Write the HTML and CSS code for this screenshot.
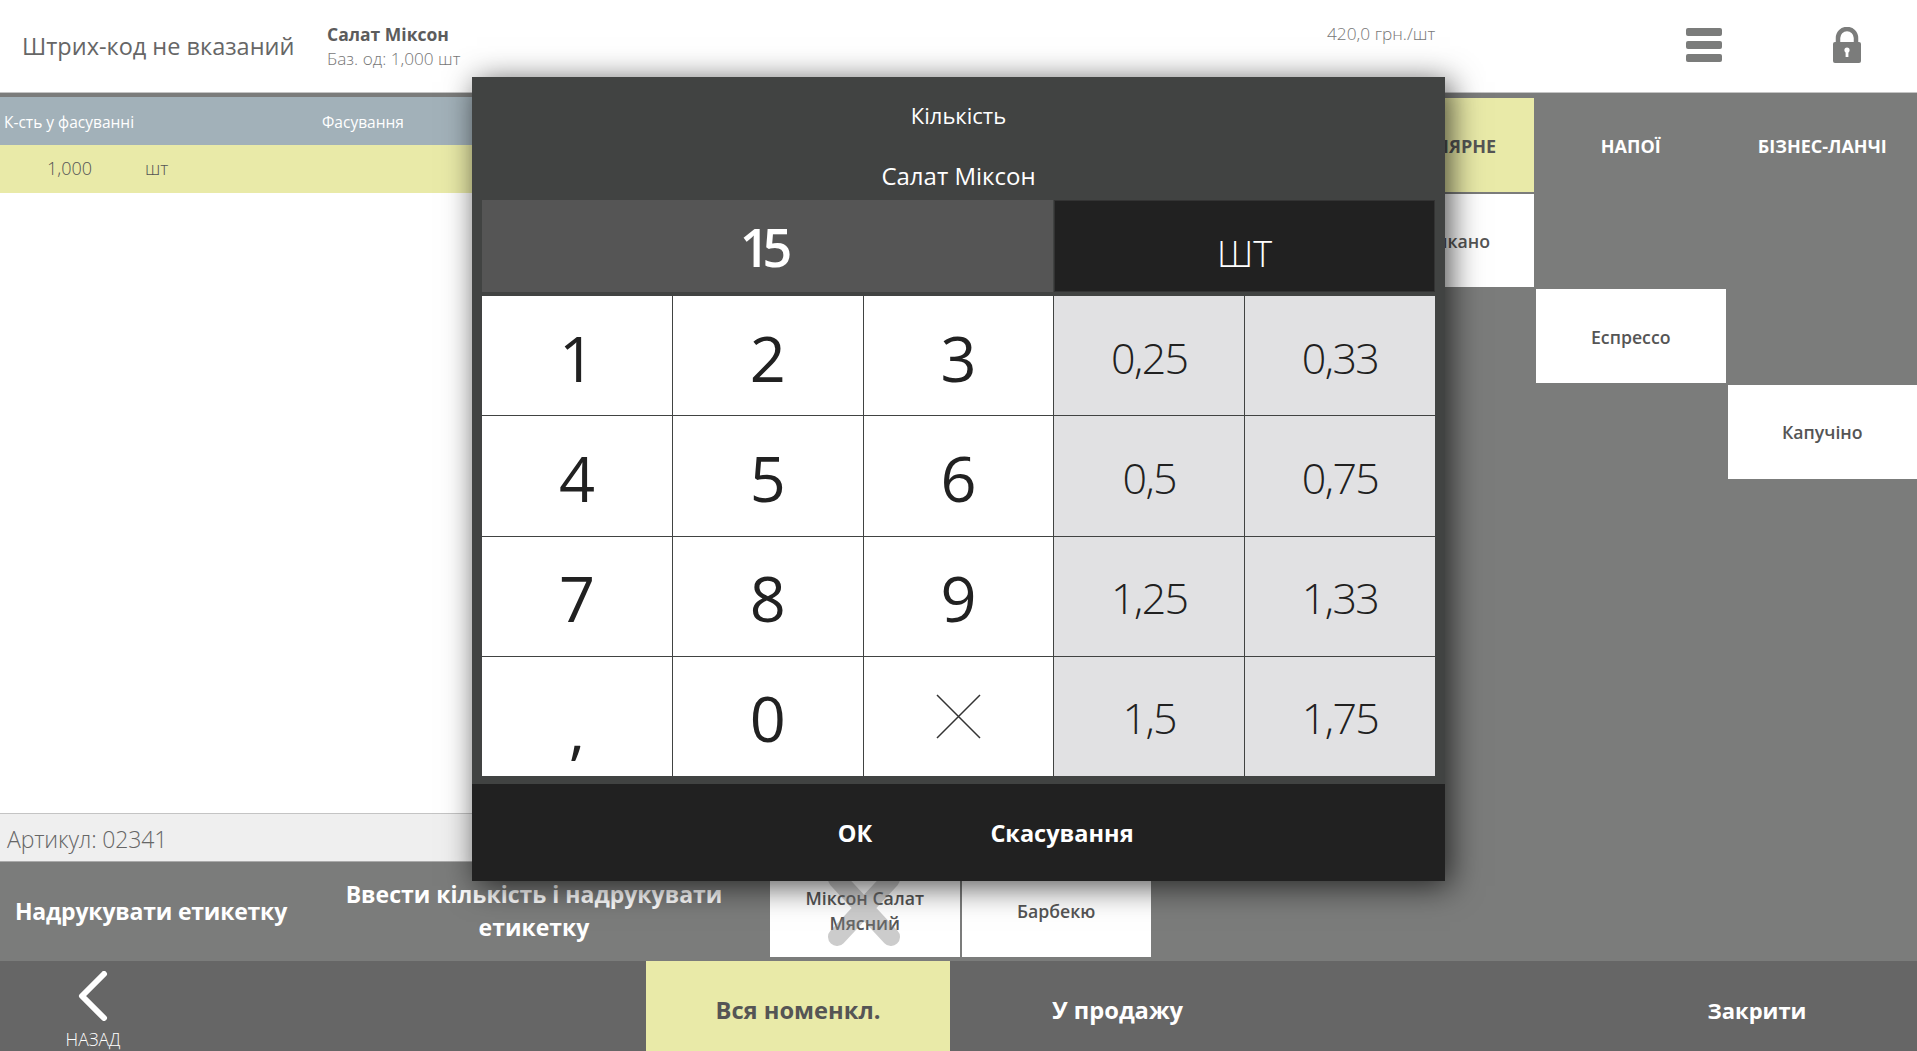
FILE: index.html
```html
<!DOCTYPE html>
<html lang="uk">
<head>
  <meta charset="UTF-8" />
  <meta name="viewport" content="width=device-width, initial-scale=1.0"/>
  <title>Кількість</title>
  <link rel="stylesheet" href="styles.css">
</head>
<body>
  <div class="app">
    <header class="top-bar">
      <div class="barcode">Штрих-код не вказаний</div>
      <div class="product">
        <div class="product-name">Салат Міксон</div>
        <div class="product-unit">Баз. од: 1,000 шт</div>
      </div>
      <div class="price">420,0 грн./шт</div>
      <svg class="menu-icon" width="36" height="34" viewBox="0 0 36 34">
        <rect x="0" y="0" width="36" height="8" rx="2"/>
        <rect x="0" y="13" width="36" height="8" rx="2"/>
        <rect x="0" y="26" width="36" height="8" rx="2"/>
      </svg>
      <svg class="lock-icon" width="28" height="36" viewBox="0 0 28 36">
        <path d="M5 16V11a9 9 0 0 1 18 0v5" fill="none" stroke="#7b7c7b" stroke-width="4.5"/>
        <rect x="0" y="15" width="28" height="21" rx="2" fill="#7b7c7b"/>
        <circle cx="14" cy="23" r="2.6" fill="#fff"/>
        <rect x="12.6" y="23" width="2.8" height="7" fill="#fff"/>
      </svg>
    </header>

    <main class="content">
      <section class="left-panel">
        <div class="table-head">
          <div class="col-qty">К-сть у фасуванні</div>
          <div>Фасування</div>
        </div>
        <div class="table-row">
          <div class="cell-qty">1,000</div>
          <div class="cell-unit">шт</div>
        </div>
        <div class="table-fill"></div>
        <div class="article">Артикул: 02341</div>
        <div class="actions">
          <div class="action action-print">Надрукувати етикетку</div>
          <div class="action action-enter">Ввести кількість і надрукувати етикетку</div>
        </div>
      </section>

      <section class="goods">
        <div class="tab tab-active cell-popular">ПОПУЛЯРНЕ</div>
        <div class="tab cell-drinks">НАПОЇ</div>
        <div class="tab cell-lunch">БІЗНЕС-ЛАНЧІ</div>
        <div class="tile cell-americano">Американо</div>
        <div class="tile cell-espresso">Еспрессо</div>
        <div class="tile cell-cappuccino">Капучіно</div>
        <div class="tile cell-mixon">
          <span class="tile-label">Міксон Салат Мясний</span>
          <svg class="tile-cross" width="72" height="76" viewBox="0 0 72 76">
            <path d="M9 9L63 67M63 9L9 67" fill="none" stroke="#808080" stroke-opacity="0.4" stroke-width="18" stroke-linecap="round"/>
          </svg>
        </div>
        <div class="tile cell-bbq">Барбекю</div>
      </section>
    </main>

    <nav class="bottom-bar">
      <div class="back">
        <svg width="32" height="50" viewBox="0 0 32 50">
          <path d="M27 3L5 25l22 22" fill="none" stroke="#fff" stroke-width="6" stroke-linecap="round" stroke-linejoin="round"/>
        </svg>
        <div class="back-label">НАЗАД</div>
      </div>
      <div class="nav-item nav-all">Вся номенкл.</div>
      <div class="nav-item nav-sale">У продажу</div>
      <div class="nav-item nav-close">Закрити</div>
    </nav>
  </div>

  <div class="overlay">
    <div class="dialog">
      <div class="dialog-titles">
        <div class="dialog-title">Кількість</div>
        <div class="dialog-title dialog-name">Салат Міксон</div>
      </div>
      <div class="dialog-body">
        <div class="entry">
          <div class="entry-value">15</div>
          <div class="entry-unit">ШТ</div>
        </div>
        <div class="keypad">
          <div class="key">1</div>
          <div class="key">2</div>
          <div class="key">3</div>
          <div class="key key-preset">0,25</div>
          <div class="key key-preset">0,33</div>
          <div class="key">4</div>
          <div class="key">5</div>
          <div class="key">6</div>
          <div class="key key-preset">0,5</div>
          <div class="key key-preset">0,75</div>
          <div class="key">7</div>
          <div class="key">8</div>
          <div class="key">9</div>
          <div class="key key-preset">1,25</div>
          <div class="key key-preset">1,33</div>
          <div class="key key-comma">,</div>
          <div class="key">0</div>
          <div class="key key-clear">
            <svg width="45" height="45" viewBox="0 0 45 45">
              <path d="M1 1L44 44M44 1L1 44" fill="none" stroke="#333" stroke-width="1.5"/>
            </svg>
          </div>
          <div class="key key-preset">1,5</div>
          <div class="key key-preset">1,75</div>
        </div>
      </div>
      <div class="dialog-footer">
        <div class="dialog-btn">ОК</div>
        <div class="dialog-btn">Скасування</div>
      </div>
    </div>
  </div>
</body>
</html>
```

FILE: styles.css
```css
body, html {
  margin: 0;
  padding: 0;
  height: 100%;
  font-family: 'Open Sans', 'Noto Sans', sans-serif;
  overflow: hidden;
  color: #555;
}

.app {
  display: flex;
  flex-direction: column;
  height: 100%;
}

.top-bar {
  display: flex;
  height: 93px;
  padding-left: 22px;
  background: #fff;
  border-bottom: 1px solid #c4c4c4;
  box-sizing: border-box;
  flex-shrink: 0;
}

.barcode {
  width: 305px;
  font-size: 23.5px;
  line-height: 92px;
  color: #666;
}

.product {
  width: 1000px;
  padding-top: 22px;
}

.product-name {
  font-size: 17.5px;
  font-weight: 700;
  line-height: 24px;
  color: #5c5c5c;
}

.product-unit {
  font-size: 17.2px;
  font-weight: 300;
  line-height: 26px;
  color: #777;
}

.price {
  width: 359px;
  padding-top: 22px;
  font-size: 17.3px;
  font-weight: 300;
  line-height: 24px;
  color: #777;
}

.menu-icon {
  margin: 28px 111px 0 0;
  fill: #7b7c7b;
}

.lock-icon {
  margin-top: 27px;
}

.content {
  display: flex;
  flex: 1;
  min-height: 0;
}

.left-panel {
  display: flex;
  flex-direction: column;
  width: 768px;
  flex-shrink: 0;
  background: #fff;
  border-top: 4px solid #7b7c7b;
  box-sizing: border-box;
}

.table-head {
  display: flex;
  height: 48px;
  padding-top: 2px;
  box-sizing: border-box;
  align-items: center;
  background: #a2b1b9;
  color: #fff;
  font-size: 15.5px;
  font-weight: 400;
}

.col-qty {
  width: 318px;
  padding-left: 4px;
}

.table-row {
  display: flex;
  height: 48px;
  padding-bottom: 2px;
  box-sizing: border-box;
  align-items: center;
  background: #e9eaa8;
  font-size: 18px;
  font-weight: 300;
}

.cell-qty {
  width: 92px;
  text-align: right;
}

.cell-unit {
  margin-left: 53px;
}

.table-fill {
  flex: 1;
}

.article {
  height: 47px;
  padding-left: 7px;
  line-height: 50px;
  font-size: 23px;
  font-weight: 300;
  letter-spacing: -0.15px;
  color: #666;
  background: #efefef;
  border-top: 1px solid #c4c4c4;
}

.actions {
  display: flex;
  height: 100px;
  background: #7b7c7b;
  border-top: 1px solid #aaa;
  box-sizing: border-box;
}

.action {
  display: flex;
  align-items: center;
  justify-content: center;
  text-align: center;
  color: #fff;
  font-size: 23px;
  font-weight: 700;
  line-height: 33px;
  box-sizing: border-box;
}

.action-print {
  width: 302px;
  letter-spacing: -0.2px;
}

.action-enter {
  width: 464px;
  padding-bottom: 2px;
}

.goods {
  display: grid;
  flex: 1;
  grid-template-columns: repeat(6, 1fr);
  grid-template-rows: repeat(9, 1fr);
  gap: 2px;
  padding: 5px 0 4px 2px;
  background: #7b7c7b;
}

.tab {
  display: flex;
  align-items: center;
  justify-content: center;
  padding-top: 3px;
  color: #fff;
  font-size: 18px;
  font-weight: 700;
}

.tab-active {
  background: #e9eaa8;
  color: #555;
}

.tile {
  position: relative;
  display: flex;
  align-items: center;
  justify-content: center;
  padding-top: 2px;
  text-align: center;
  background: #fff;
  font-size: 17.7px;
  font-weight: 600;
  line-height: 25px;
}

.tile-label {
  padding: 0 20px;
}

.tile-cross {
  position: absolute;
  left: 58px;
  top: 7px;
}

.cell-popular { grid-column: 4; grid-row: 1; }
.cell-drinks { grid-column: 5; grid-row: 1; }
.cell-lunch { grid-column: 6; grid-row: 1; }
.cell-americano { grid-column: 4; grid-row: 2; }
.cell-espresso { grid-column: 5; grid-row: 3; }
.cell-cappuccino { grid-column: 6; grid-row: 4; }
.cell-mixon { grid-column: 1; grid-row: 9; }
.cell-bbq { grid-column: 2; grid-row: 9; }

.bottom-bar {
  display: flex;
  height: 90px;
  background: #666;
  flex-shrink: 0;
}

.back {
  width: 186px;
  margin-right: 460px;
  padding-top: 10px;
  text-align: center;
  color: #fff;
  box-sizing: border-box;
}

.back svg {
  display: block;
  margin: 0 auto;
}

.back-label {
  font-size: 17.5px;
  font-weight: 300;
  line-height: 24px;
  margin-top: 6px;
}

.nav-item {
  display: flex;
  align-items: center;
  justify-content: center;
  padding-top: 8px;
  font-size: 23.7px;
  font-weight: 700;
  color: #fff;
}

.nav-all {
  width: 304px;
  background: #e9eaa8;
  color: #555;
}

.nav-sale {
  width: 335px;
}

.nav-close {
  width: 320px;
  margin-left: auto;
  font-size: 22px;
}

.overlay {
  position: absolute;
  left: 0;
  top: 0;
  width: 100%;
  height: 100%;
  display: flex;
  justify-content: center;
  align-items: flex-start;
  padding-top: 77px;
  box-sizing: border-box;
}

.dialog {
  width: 973px;
  background: #414342;
  box-shadow: 5px 5px 30px rgba(0, 0, 0, 0.7);
}

.dialog-titles {
  padding: 22px 0 8px;
  text-align: center;
  color: #fff;
  font-size: 22px;
  line-height: 32px;
}

.dialog-name {
  margin-top: 29px;
  font-size: 24px;
}

.dialog-body {
  padding: 0 10px 8px;
}

.entry {
  display: grid;
  grid-template-columns: 3fr 2fr;
  gap: 1px;
  height: 92px;
  margin-bottom: 4px;
  color: #fff;
}

.entry-value {
  display: flex;
  align-items: center;
  justify-content: center;
  padding-right: 10px;
  background: #555;
  font-size: 52px;
  font-weight: 650;
  letter-spacing: -7px;
}

.entry-unit {
  display: flex;
  align-items: center;
  justify-content: center;
  padding-top: 14px;
  background: #212121;
  border: 1px solid #333;
  box-sizing: border-box;
  font-size: 36px;
  font-weight: 300;
}

.keypad {
  display: grid;
  grid-template-columns: repeat(5, 1fr);
  grid-template-rows: repeat(4, 1fr);
  gap: 1px;
  height: 480px;
}

.key {
  display: flex;
  align-items: center;
  justify-content: center;
  padding-top: 3px;
  box-sizing: border-box;
  background: #fff;
  color: #212121;
  font-size: 63px;
  font-weight: 380;
}

.key-preset {
  background: #e1e1e3;
  font-size: 43px;
  font-weight: 300;
  letter-spacing: -1.6px;
}

.key-comma {
  padding-top: 24px;
}

.key-clear {
  padding-top: 0;
}

.dialog-footer {
  display: flex;
  justify-content: center;
  gap: 17px;
  height: 97px;
  background: #212121;
}

.dialog-btn {
  display: flex;
  align-items: center;
  justify-content: center;
  width: 190px;
  color: #fff;
  font-size: 23.5px;
  font-weight: 700;
}
```
